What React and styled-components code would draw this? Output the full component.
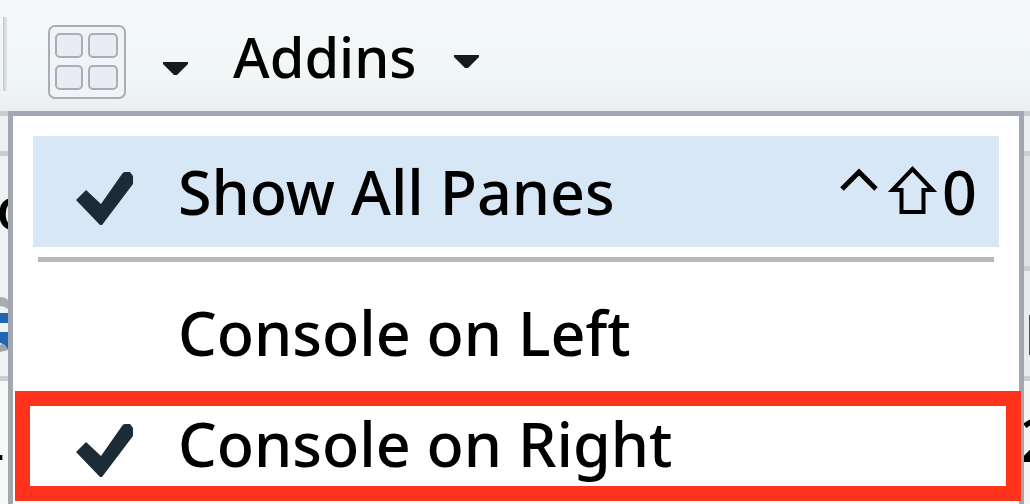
import React from "react";
import styled, { createGlobalStyle } from "styled-components";

const GlobalStyle = createGlobalStyle`
  * { box-sizing: border-box; }
  html, body { margin: 0; height: 100%; overflow: hidden; }
  #root { height: 100%; }
  body, button { font-family: "Noto Sans", "Open Sans", sans-serif; font-weight: 500; color: #000; }
`;

const Page = styled.div`
  position: relative;
  display: flex;
  flex-direction: column;
  min-height: 100%;
  overflow: hidden;
  background: #f6f8f9;
`;

const Toolbar = styled.header`
  display: flex;
  align-items: center;
  height: 111px;
  background: linear-gradient(#f4f8f9 0%, #f1f6f7 70%, #eaeeef 100%);
`;

const Divider = styled.span`
  width: 5px;
  height: 74px;
  margin: 0 40px 4px 3px;
  background: linear-gradient(90deg, #c4c7c8, #f4f7f8);
`;

const ToolButton = styled.button`
  display: flex;
  align-items: center;
  gap: 37px;
  height: 111px;
  margin: 0 45px 0 0;
  padding: ${(p) => p.$drop}px 0 0;
  border: 0;
  background: none;
  font-size: 56px;
  line-height: 72px;
`;

const Caret = styled.svg`
  width: 25px;
  height: 13px;
  margin-top: 12px;
`;

const Backdrop = styled.main`
  flex: 1;
  display: flex;
  justify-content: space-between;
  overflow: hidden;
`;

const Column = styled.section`
  width: ${(p) => p.$width}px;
  overflow: hidden;
  border-top: 5px solid #c9cbcc;
`;

const Cell = styled.div`
  display: flex;
  flex-direction: column;
  height: ${(p) => p.$height}px;
  overflow: hidden;
  border-bottom: 5px solid #cbcdcf;
  background: ${(p) => p.$fill};

  &:last-child {
    border-bottom: 0;
  }
`;

const Glyph = styled.span`
  display: flex;
  flex: none;
  align-items: center;
  justify-content: ${(p) => (p.$end ? "flex-end" : "flex-start")};
  height: ${(p) => p.$height}px;
  margin-left: ${(p) => (p.$cut ? -4 : 0)}px;
  font-family: ${(p) => (p.$end ? '"DejaVu Sans", sans-serif' : "inherit")};
  font-size: ${(p) => p.$size || 60}px;
  line-height: 72px;
`;

const Menu = styled.div`
  position: absolute;
  top: 111px;
  left: 8px;
  right: 6px;
  padding: 20px;
  border: 5px solid #a3a7b1;
  background: #fff;
`;

const Item = styled.button`
  position: relative;
  display: flex;
  align-items: center;
  width: 100%;
  height: 111px;
  margin: 0;
  padding: 0 22px 0 43px;
  border: 0;
  background: ${(p) => (p.$active ? "#d7e7f6" : "#fff")};
  font-size: 61px;
  line-height: 72px;
  text-align: left;
`;

const CheckSlot = styled.span`
  display: flex;
  width: 102px;
  padding-top: 14px;
`;

const Label = styled.span`
  flex: 1;
`;

const Shortcut = styled.span`
  display: flex;
  align-items: center;
`;

const ShortcutDigit = styled.span`
  margin-left: 4px;
`;

const Separator = styled.hr`
  height: 5px;
  margin: 10px 5px 15px;
  border: 0;
  background: #b8b8b9;
`;

const Highlight = styled.span`
  position: absolute;
  inset: 3px -22px -2px -18px;
  border: 15px solid #ff321c;
`;

const PanesIcon = () => (
  <svg width="78" height="74" viewBox="0 0 78 74" fill="none" stroke="#a9aeb2" strokeWidth="2" aria-hidden="true">
    <rect x="1" y="1" width="76" height="72" rx="6" fill="#f0f4f7" />
    <g fill="#e9edf3">
      <rect x="8" y="9" width="26" height="23" rx="4" />
      <rect x="41" y="9" width="28" height="23" rx="4" />
      <rect x="8" y="41" width="26" height="23" rx="4" />
      <rect x="41" y="41" width="28" height="23" rx="4" />
    </g>
  </svg>
);

const Arrow = () => (
  <Caret viewBox="0 0 25 13" aria-hidden="true">
    <path d="M0 0H25V2L14 13H11L0 2Z" fill="#151a1b" />
  </Caret>
);

const Check = () => (
  <svg width="58" height="54" viewBox="0 0 58 54" aria-hidden="true">
    <path d="M0 28L10 18L25 32L46 2Q47 0 49 0H54L57 4V12L26 53H24Z" fill="#1c2c36" />
  </svg>
);

const ControlKey = () => (
  <svg width="47" height="61" viewBox="0 0 47 61" fill="none" stroke="#000" strokeWidth="5" aria-label="Control">
    <path d="M2 28L19 11L36 28" />
  </svg>
);

const ShiftKey = () => (
  <svg width="51" height="61" viewBox="0 0 51 61" fill="none" stroke="#000" strokeWidth="4" aria-label="Shift">
    <path d="M25.500 8L45.500 29H36.500V51H14.500V29H5.500Z" />
  </svg>
);

const ProjectLogo = () => (
  <svg width="8" height="119" viewBox="0 0 8 119" aria-hidden="true">
    <path d="M0 40Q5 40 8 43V52Q4 49 0 49Z" fill="#a9adb0" />
    <path d="M0 56H8V66H0ZM0 75H8V93Q4 86 0 86Z" fill="#2166b5" />
    <path d="M0 88Q4 85 7 91L8 93L0 95Z" fill="#a0a4a8" />
  </svg>
);

const entries = [
  { label: "Show All Panes", checked: true, active: true, shortcut: true },
  { separator: true },
  { label: "Console on Left" },
  { label: "Console on Right", checked: true, highlighted: true },
];

export default function App() {
  return (
    <Page>
      <GlobalStyle />
      <Toolbar>
        <Divider />
        <ToolButton $drop={13} aria-label="Workspace panes">
          <PanesIcon />
          <Arrow />
        </ToolButton>
        <ToolButton $drop={0}>
          Addins
          <Arrow />
        </ToolButton>
      </Toolbar>
      <Backdrop>
        <Column $width={8}>
          <Cell $height={40} $fill="#eef0f2" />
          <Cell $height={225} $fill="#eff2f3">
            <Glyph $height={101} $cut>o</Glyph>
            <ProjectLogo />
          </Cell>
          <Cell $height={130} $fill="#f8f8f9">
            <Glyph $height={115} $end>1</Glyph>
          </Cell>
        </Column>
        <Column $width={6}>
          <Cell $height={40} $fill="#edeff2" />
          <Cell $height={115} $fill="#dfe1e2" />
          <Cell $height={110} $fill="#e9ebef">
            <Glyph $height={124} $size={56}>F</Glyph>
          </Cell>
          <Cell $height={130} $fill="#f5f5f6">
            <Glyph $height={115} $cut>2</Glyph>
          </Cell>
        </Column>
      </Backdrop>
      <Menu role="menu">
        {entries.map((entry, i) =>
          entry.separator ? (
            <Separator key={i} />
          ) : (
            <Item key={i} role="menuitem" $active={entry.active}>
              <CheckSlot>{entry.checked && <Check />}</CheckSlot>
              <Label>{entry.label}</Label>
              {entry.shortcut && (
                <Shortcut>
                  <ControlKey />
                  <ShiftKey />
                  <ShortcutDigit>0</ShortcutDigit>
                </Shortcut>
              )}
              {entry.highlighted && <Highlight />}
            </Item>
          )
        )}
      </Menu>
    </Page>
  );
}
